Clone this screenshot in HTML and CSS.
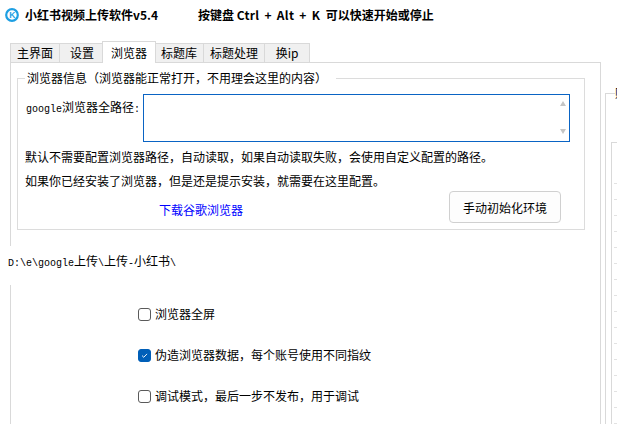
FILE: index.html
```html
<!DOCTYPE html>
<html lang="zh-CN">
<head>
    <meta charset="UTF-8">
    <title>小红书视频上传软件v5.4</title>
    <link rel="stylesheet" href="styles.css">
</head>
<body>
    <div class="titlebar">
        <svg class="logo" viewBox="0 0 14 14">
            <circle cx="7" cy="7" r="5.8" fill="#fff" stroke="#1e9fe2" stroke-width="2.2"/>
            <text x="7.2" y="10" text-anchor="middle" font-size="8.5" font-family="Liberation Sans" font-weight="bold" fill="#1e9fe2">K</text>
        </svg>
        <span class="app-name">小红书视频上传软件v5.4</span>
        <span class="hotkey">按键盘 <span class="keys">Ctrl + Alt + K</span>&nbsp; 可以快速开始或停止</span>
    </div>

    <div class="main">
        <div class="tabctl">
            <div class="tabs">
                <div class="tab">主界面</div>
                <div class="tab">设置</div>
                <div class="tab active">浏览器</div>
                <div class="tab">标题库</div>
                <div class="tab">标题处理</div>
                <div class="tab">换ip</div>
            </div>
            <div class="page">
                <fieldset class="group">
                    <legend>浏览器信息（浏览器能正常打开，不用理会这里的内容）</legend>
                    <div class="path-row">
                        <label class="path-lbl"><span class="asc">google</span>浏览器全路径<span class="asc">:</span></label>
                        <div class="path-box">
                            <div class="scroll"><span class="arr up"></span><span class="arr down"></span></div>
                        </div>
                    </div>
                    <p class="note">默认不需要配置浏览器路径，自动读取，如果自动读取失败，会使用自定义配置的路径。</p>
                    <p class="note">如果你已经安装了浏览器，但是还是提示安装，就需要在这里配置。</p>
                    <div class="actions">
                        <a class="link">下载谷歌浏览器</a>
                        <button class="btn">手动初始化环境</button>
                    </div>
                </fieldset>

                <div class="path-val"><span class="asc">D:\e\google</span>上传<span class="asc">\</span>上传<span class="asc">-</span>小红书<span class="asc">\</span></div>

                <div class="opts">
                    <label class="opt"><span class="box"></span>浏览器全屏</label>
                    <label class="opt"><span class="box on"><svg viewBox="0 0 13 13"><path d="M3.6 6.6l2 2 3.9-4" stroke="#fff" stroke-width="1.1" fill="none"/></svg></span>伪造浏览器数据，每个账号使用不同指纹</label>
                    <label class="opt"><span class="box"></span>调试模式，最后一步不发布，用于调试</label>
                </div>
            </div>
        </div>

        <fieldset class="side">
            <legend>账号</legend>
            <div class="grid">
                <div class="hd"></div>
                <div class="row"></div><div class="row"></div><div class="row"></div>
                <div class="row"></div><div class="row"></div><div class="row"></div>
                <div class="row"></div><div class="row"></div><div class="row"></div>
                <div class="row"></div><div class="row"></div><div class="row"></div>
                <div class="row"></div><div class="row"></div><div class="row"></div>
            </div>
        </fieldset>
    </div>
</body>
</html>
```

FILE: styles.css
```css
*{box-sizing: border-box;}
html, body{margin: 0; height: 424px; overflow: hidden;}
body{
    width: 617px;
    font: 12px/16px "Noto Sans CJK SC", sans-serif;
    color: #000;
    background: #fff;
}

.titlebar{
    display: flex;
    align-items: center;
    height: 30px;
    padding-left: 5px;
    font-weight: bold;
}
.logo{width: 14px; height: 14px; margin-right: 6px;}
.hotkey{margin-left: 40px;}
.keys{word-spacing: 2px; letter-spacing: 0.3px;}

.main{
    display: flex;
    align-items: flex-start;
    margin-top: 11px;
}
.tabctl{flex: 0 0 591px; margin-left: 10px;}

.tabs{
    display: flex;
    align-items: flex-end;
    height: 21px;
}
.tab{
    height: 19px;
    line-height: 18px;
    min-width: 46px;
    padding: 0 6px;
    text-align: center;
    background: #f0f0f0;
    border: 1px solid #d9d9d9;
    border-bottom: none;
    margin-right: -1px;
}
.tab.active{
    position: relative;
    z-index: 1;
    height: 22px;
    line-height: 21px;
    padding: 0 8px;
    margin: 0 -2px -1px -2px;
    background: #fff;
}

.page{
    position: relative;
    height: 370px;
    border: 1px solid #d9d9d9;
}

.group{
    width: 568px;
    min-width: 0;
    margin: 7px 0 0 6px;
    padding: 0 0 6px;
    border: 1px solid #dcdcdc;
}
.group legend{
    margin-left: 7px;
    padding: 0 9px 0 2px;
    line-height: 16px;
}

.asc{font: 10px/16px "Liberation Mono", monospace;}

.path-row{
    display: flex;
    align-items: flex-start;
    margin-top: 8px;
    padding: 0 14px 0 8px;
}
.path-lbl{width: 117px; margin-top: 5px;}
.path-box{
    flex: 1;
    height: 48px;
    border: 1px solid #0a64c4;
    display: flex;
    justify-content: flex-end;
}
.scroll{
    display: flex;
    flex-direction: column;
    justify-content: space-between;
    padding: 6px 1px 7px 0;
    width: 9px;
}
.arr{width: 0; height: 0; border-left: 3.5px solid transparent; border-right: 3.5px solid transparent;}
.arr.up{border-bottom: 5px solid #c5c5c5;}
.arr.down{border-top: 5px solid #c5c5c5;}

.note{margin: 0; padding-left: 7px; line-height: 24px;}
.group .note:first-of-type{margin-top: 3px;}

.actions{
    display: flex;
    align-items: center;
    margin-top: -2px;
}
.link{margin: 6px 0 0 141px; color: #0000ff;}
.btn{
    margin-left: auto;
    margin-right: 23px;
    width: 112px;
    height: 32px;
    font: 12px "Noto Sans CJK SC", sans-serif;
    color: #000;
    background: #fdfdfd;
    border: 1px solid #d0d0d0;
    border-radius: 4px;
}

/* label sits over the tab page border */
.path-val{
    position: absolute;
    left: -3px;
    top: 183px;
    height: 39px;
    padding: 7px 4px 0 0;
    background: #fff;
}

.opts{
    display: flex;
    flex-direction: column;
    gap: 25px;
    margin: 76px 0 0 127px;
}
.opt{display: flex; align-items: center;}
.box{
    width: 13px;
    height: 13px;
    margin-right: 4px;
    border: 1px solid #5a5a5a;
    border-radius: 3px;
    background: #fff;
}
.box.on{background: #005fb8; border-color: #005fb8;}
.box svg{display: block; width: 11px; height: 11px;}

.side{
    flex: 0 0 120px;
    min-width: 0;
    height: 400px;
    margin: 44px 0 0 4px;
    padding: 0;
    border: 1px solid #d9d9d9;
}
.side legend{margin-left: 9px; padding: 0; line-height: 16px;}
.grid{
    margin: 41px 0 0 5px;
    border-left: 1px solid #d9d9d9;
    border-top: 1px solid #d9d9d9;
}
.grid .hd{height: 41px; margin-left: 2px; border-bottom: 1px solid #e2e2e2;}
.grid .row{height: 16px; margin-left: 2px; border-bottom: 1px solid #e2e2e2;}
```
